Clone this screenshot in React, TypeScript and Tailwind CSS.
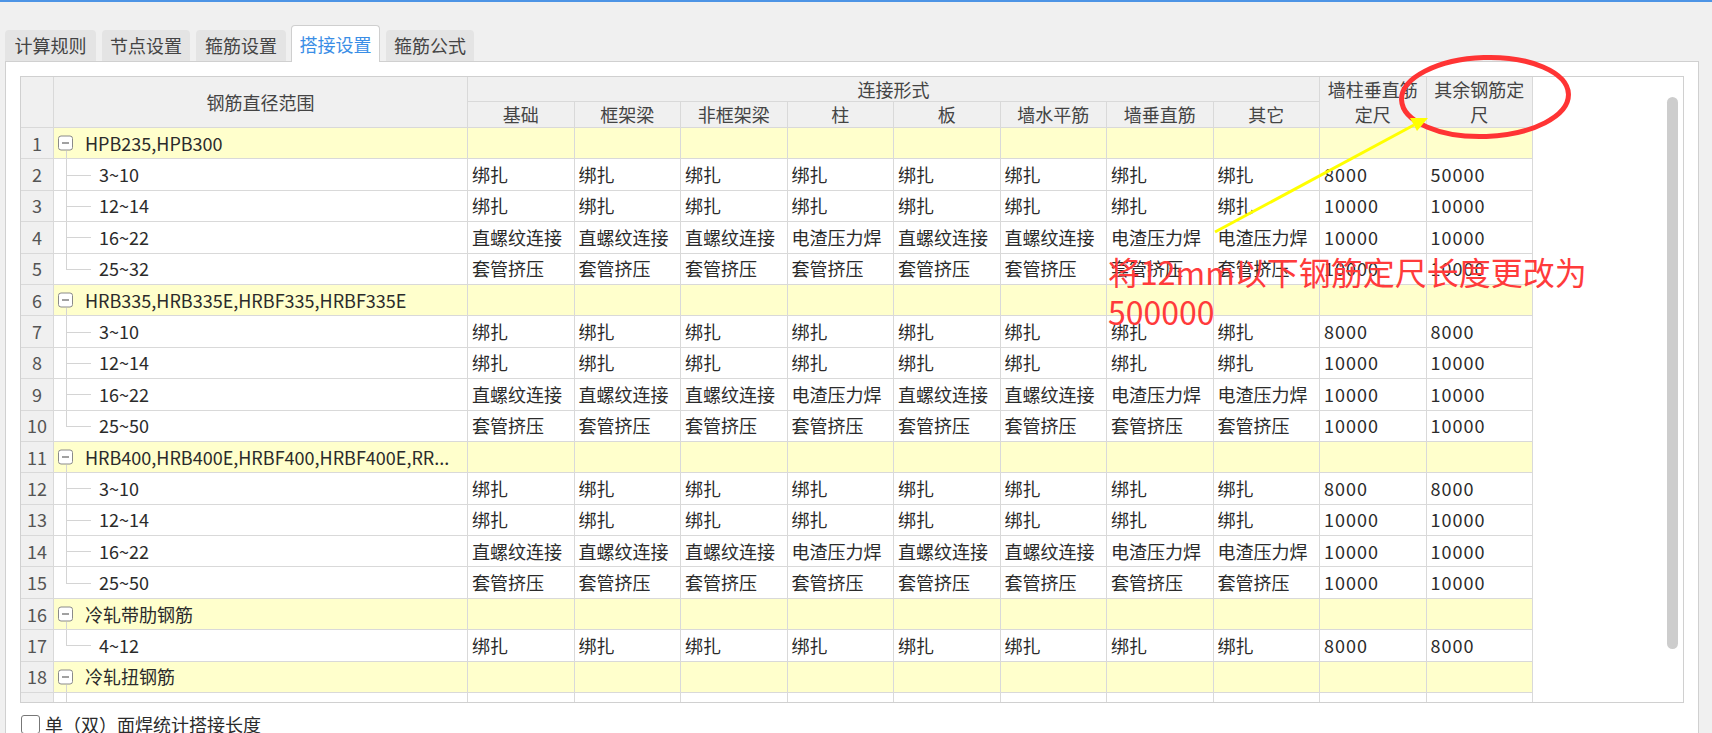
import React from "react";

type Row =
  | { kind: "group"; num: number; name: string }
  | { kind: "child"; num: number; name: string; last: boolean; vals: string[] }
  | { kind: "stub"; num: number };

const tabs = [
  { label: "计算规则", w: "w-[91px]", ml: "ml-[5px]" },
  { label: "节点设置", w: "w-[88px]", ml: "ml-[6px]" },
  { label: "箍筋设置", w: "w-[90px]", ml: "ml-[6px]" },
  { label: "搭接设置", w: "w-[89px]", ml: "ml-[5px]", active: true },
  { label: "箍筋公式", w: "w-[88px]", ml: "ml-[6px]" },
];

const subCols = ["基础", "框架梁", "非框架梁", "柱", "板", "墙水平筋", "墙垂直筋", "其它"];

const BZ = Array(8).fill("绑扎");
const LJ = ["直螺纹连接", "直螺纹连接", "直螺纹连接", "电渣压力焊", "直螺纹连接", "直螺纹连接", "电渣压力焊", "电渣压力焊"];
const TG = Array(8).fill("套管挤压");

const rows: Row[] = [
  { kind: "group", num: 1, name: "HPB235,HPB300" },
  { kind: "child", num: 2, name: "3~10", last: false, vals: [...BZ, "8000", "50000"] },
  { kind: "child", num: 3, name: "12~14", last: false, vals: [...BZ, "10000", "10000"] },
  { kind: "child", num: 4, name: "16~22", last: false, vals: [...LJ, "10000", "10000"] },
  { kind: "child", num: 5, name: "25~32", last: true, vals: [...TG, "10000", "10000"] },
  { kind: "group", num: 6, name: "HRB335,HRB335E,HRBF335,HRBF335E" },
  { kind: "child", num: 7, name: "3~10", last: false, vals: [...BZ, "8000", "8000"] },
  { kind: "child", num: 8, name: "12~14", last: false, vals: [...BZ, "10000", "10000"] },
  { kind: "child", num: 9, name: "16~22", last: false, vals: [...LJ, "10000", "10000"] },
  { kind: "child", num: 10, name: "25~50", last: true, vals: [...TG, "10000", "10000"] },
  { kind: "group", num: 11, name: "HRB400,HRB400E,HRBF400,HRBF400E,RR..." },
  { kind: "child", num: 12, name: "3~10", last: false, vals: [...BZ, "8000", "8000"] },
  { kind: "child", num: 13, name: "12~14", last: false, vals: [...BZ, "10000", "10000"] },
  { kind: "child", num: 14, name: "16~22", last: false, vals: [...LJ, "10000", "10000"] },
  { kind: "child", num: 15, name: "25~50", last: true, vals: [...TG, "10000", "10000"] },
  { kind: "group", num: 16, name: "冷轧带肋钢筋" },
  { kind: "child", num: 17, name: "4~12", last: true, vals: [...BZ, "8000", "8000"] },
  { kind: "group", num: 18, name: "冷轧扭钢筋" },
  { kind: "stub", num: 19 },
];

const cell = "border-r border-b border-[#d9d9d9]";
const gridCols = "grid grid-cols-[33px_414px_repeat(10,106.5px)]";

function NameCell({ row }: { row: Row }) {
  if (row.kind === "group") {
    return (
      <div className={`${cell} relative bg-[#ffffcc] flex items-center pl-[31px] whitespace-nowrap overflow-hidden`}>
        <div className="absolute left-[4px] top-1/2 -translate-y-1/2 w-[15px] h-[15px] border border-[#8a8a8a] rounded-[3px] bg-white flex items-center justify-center">
          <div className="w-[7px] h-px bg-[#444]" />
        </div>
        <div className="absolute left-[12px] top-[calc(50%+8px)] bottom-0 w-px bg-[#d4d4d4]" />
        {row.name}
      </div>
    );
  }
  if (row.kind === "child") {
    return (
      <div className={`${cell} relative flex items-center pl-[45px] whitespace-nowrap`}>
        <div className={`absolute left-[12px] top-0 w-px bg-[#d4d4d4] ${row.last ? "h-1/2" : "bottom-0"}`} />
        <div className="absolute left-[12px] top-1/2 w-[25px] h-px bg-[#d4d4d4]" />
        {row.name}
      </div>
    );
  }
  return (
    <div className={`${cell} relative`}>
      <div className="absolute left-[12px] top-0 bottom-0 w-px bg-[#d4d4d4]" />
    </div>
  );
}

function DataRow({ row }: { row: Row }) {
  const yellow = row.kind === "group";
  return (
    <div className={`${gridCols} h-[31.4px]`}>
      <div className={`${cell} bg-[#f0f0f0] flex items-center justify-center text-[#555]`}>{row.num}</div>
      <NameCell row={row} />
      {Array.from({ length: 10 }).map((_, i) => (
        <div
          key={i}
          className={`${cell} ${yellow ? "bg-[#ffffcc]" : ""} ${i >= 8 ? "tracking-[1px]" : ""} flex items-center pl-[4px] whitespace-nowrap overflow-hidden`}
        >
          {row.kind === "child" ? row.vals[i] : ""}
        </div>
      ))}
    </div>
  );
}

export default function App() {
  return (
    <div
      className="relative w-[1712px] h-[733px] overflow-hidden bg-[#f0f0f0] text-[18px] text-[#2b2b2b]"
      style={{ fontFamily: '"Noto Sans CJK SC", "Noto Sans", sans-serif' }}
    >
      {/* top accent line */}
      <div className="h-[2px] bg-[#4d94e5]" />

      {/* tabs */}
      <div className="flex items-end h-[59px]">
        {tabs.map((t) =>
          t.active ? (
            <div
              key={t.label}
              className={`${t.w} ${t.ml} relative z-10 -mb-px h-[37px] bg-white border border-b-0 border-[#cfcfcf] rounded-t-[4px] flex items-center justify-center text-[#3a8ee6]`}
            >
              {t.label}
            </div>
          ) : (
            <div
              key={t.label}
              className={`${t.w} ${t.ml} h-[31px] bg-[#e4e4e4] rounded-t-[4px] flex items-center justify-center text-[#444]`}
            >
              {t.label}
            </div>
          )
        )}
      </div>

      {/* panel */}
      <div className="ml-[5px] w-[1694px] h-[700px] bg-white border border-[#d0d0d0] px-[14px] pt-[14px]">
        <div className="w-[1664px] h-[627px] border border-[#d0d0d0] flex justify-between overflow-hidden">
          <div className="w-[1512px]">
            {/* header */}
            <div className={`${gridCols} grid-rows-[25px_26px] bg-[#f0f0f0] text-[#444]`}>
              <div className={`${cell} row-span-2`} />
              <div className={`${cell} row-span-2 flex items-center justify-center`}>钢筋直径范围</div>
              <div className={`${cell} col-span-8 flex items-center justify-center`}>连接形式</div>
              <div className={`${cell} row-span-2 flex items-center justify-center text-center leading-[25px] overflow-hidden`}>
                墙柱垂直筋
                <br />
                定尺
              </div>
              <div className={`${cell} row-span-2 flex items-center justify-center text-center leading-[25px] overflow-hidden`}>
                其余钢筋定
                <br />
                尺
              </div>
              {subCols.map((c) => (
                <div key={c} className={`${cell} flex items-center justify-center`}>
                  {c}
                </div>
              ))}
            </div>
            {rows.map((r) => (
              <DataRow key={r.num} row={r} />
            ))}
          </div>
          {/* scrollbar */}
          <div className="mt-[20px] mr-[5px] w-[11px] h-[552px] rounded-full bg-[#cdcdcd]" />
        </div>

        <div className="flex items-center mt-[11px] h-[20px]">
          <div className="w-[19px] h-[19px] ml-[1px] border border-[#777] rounded-[3px] bg-white" />
          <span className="ml-[5px]">单（双）面焊统计搭接长度</span>
        </div>
      </div>

      {/* annotation overlay */}
      <svg className="absolute inset-0 pointer-events-none" width="1712" height="733" viewBox="0 0 1712 733">
        <ellipse cx="1485" cy="97" rx="83.5" ry="39.5" fill="none" stroke="#ff3434" strokeWidth="5" transform="rotate(-2 1485 97)" />
        <line x1="1215" y1="232" x2="1414" y2="125" stroke="#ffff00" strokeWidth="3" />
        <polygon points="1428,118 1417,131 1410,118" fill="#ffff00" />
      </svg>
      <div className="absolute left-[1108px] top-[251px] text-[32px] leading-[40px] text-[#ff3b3b] pointer-events-none">
        将12mm以下钢筋定尺长度更改为
        <br />
        500000
      </div>
    </div>
  );
}
